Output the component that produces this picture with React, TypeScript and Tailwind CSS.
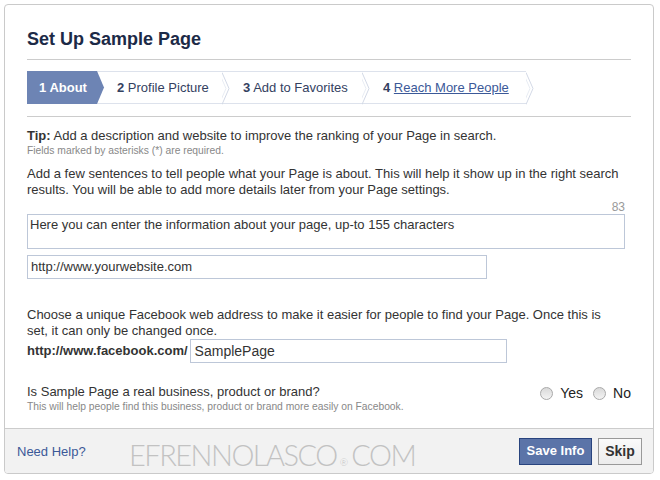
import clsx from "clsx";

const FONT = { fontFamily: '"Liberation Sans", Arial, sans-serif' };

type Step = { n: number; label: string; w: string; pl: string; active?: boolean; link?: boolean };

const STEPS: Step[] = [
  { n: 1, label: "About", w: "w-[70px]", pl: "pl-[12px]", active: true },
  { n: 2, label: "Profile Picture", w: "w-[125px]", pl: "pl-[20px]" },
  { n: 3, label: "Add to Favorites", w: "w-[140px]", pl: "pl-[21px]" },
  { n: 4, label: "Reach More People", w: "w-[164px]", pl: "pl-[21px]", link: true },
];

function StepTab({ step }: { step: Step }) {
  return (
    <div
      className={clsx(
        "relative flex h-[33px] items-center text-[13px]",
        step.w,
        step.pl,
        step.active ? "bg-[#6d84b4] text-white" : "border-y border-[#dde2ec] text-[#34415f]"
      )}
    >
      <span className={clsx(step.active && "font-bold")}>
        <b>{step.n}</b>{" "}
        <span className={clsx(step.link && "text-[#3b5998] underline")}>{step.label}</span>
      </span>
      {/* chevron at the right edge */}
      <svg className="absolute left-full top-0 z-10 h-[33px] w-[9px]" viewBox="0 0 9 33">
        {step.active ? (
          <polygon points="0,0 7,16.5 0,33" fill="#6d84b4" />
        ) : (
          <>
            <polyline points="-3,0.5 4,16.5 -3,32.5" fill="none" stroke="#e8ecf3" strokeWidth="1" />
            <polyline points="0,0.5 7,16.5 0,32.5" fill="none" stroke="#d3d9e6" strokeWidth="1" />
          </>
        )}
      </svg>
    </div>
  );
}

function Radio({ label }: { label: string }) {
  return (
    <label className="flex items-center gap-[7px]">
      <span className="h-[13px] w-[13px] rounded-full border border-[#a9a9a9] bg-gradient-to-b from-[#d9d9d9] to-[#f4f4f4]" />
      <span>{label}</span>
    </label>
  );
}

export default function App() {
  return (
    <div className="min-h-[480px] bg-white pl-[4px] pt-[4px]" style={FONT}>
      <div className="relative flex h-[470px] w-[650px] flex-col overflow-hidden rounded-[4px] border border-[#cacaca] text-[13px] text-[#333]">
        <div className="flex-1 px-[22px] pt-[24px]">
          <h1 className="border-b border-[#ccc] pb-[10px] text-[18px] font-bold leading-[20px] text-[#1c2a47]">
            Set Up Sample Page
          </h1>

          <div className="mt-[11px] flex border-b border-[#ccc] pb-[12px]">
            {STEPS.map((s) => (
              <StepTab key={s.n} step={s} />
            ))}
          </div>

          <p className="mt-[11px] leading-[16px]">
            <b>Tip:</b> Add a description and website to improve the ranking of your Page in search.
          </p>
          <p className="mt-[1px] text-[10.3px] leading-[12px] text-[#888]">Fields marked by asterisks (*) are required.</p>

          <p className="mt-[9px] max-w-[600px] leading-[16px]">
            Add a few sentences to tell people what your Page is about. This will help it show up in the right search
            results. You will be able to add more details later from your Page settings.
          </p>
          <div className="w-[598px] pt-[2px] text-right text-[12px] leading-[14px] text-[#999]">83</div>
          <div className="h-[35px] w-[598px] border border-[#bdc7d8] px-[2px] pt-[2px] leading-[16px]">
            Here you can enter the information about your page, up-to 155 characters
          </div>
          <div className="mt-[6px] flex h-[24px] w-[460px] items-center border border-[#bdc7d8] px-[3px]">
            http://www.yourwebsite.com
          </div>

          <p className="mt-[28px] max-w-[588px] leading-[16px]">
            Choose a unique Facebook web address to make it easier for people to find your Page. Once this is set, it
            can only be changed once.
          </p>
          <div className="flex items-center">
            <span className="font-bold">http://www.facebook.com/</span>
            <div className="ml-[2px] flex h-[24px] w-[317px] items-center border border-[#bdc7d8] px-[4px] text-[14px]">
              SamplePage
            </div>
          </div>

          <div className="mt-[21px] flex items-start justify-between">
            <div>
              <p className="leading-[16px]">Is Sample Page a real business, product or brand?</p>
              <p className="mt-[1px] text-[10.3px] leading-[12px] text-[#888]">
                This will help people find this business, product or brand more easily on Facebook.
              </p>
            </div>
            <div className="flex gap-[10px] pt-[1px] text-[14px] leading-[16px] text-[#222]">
              <Radio label="Yes" />
              <Radio label="No" />
            </div>
          </div>
        </div>

        <div className="relative flex h-[45px] items-center justify-between border-t border-[#ccc] bg-[#f2f2f2] pl-[12px] pr-[11px]">
          <a className="mt-[2px] text-[13px] text-[#3b5998]">Need Help?</a>
          <div
            className="pointer-events-none absolute left-[124px] top-[9px] flex items-baseline text-[29px] font-light leading-[34px] tracking-[-1.5px] text-[#c2c2c2]"
            style={{ fontFamily: 'Lato, "Liberation Sans", sans-serif' }}
          >
            <span>EFRENNOLASCO</span>
            <span className="mx-[3px] text-[10px] tracking-normal">®</span>
            <span>COM</span>
          </div>
          <div className="flex gap-[6px]">
            <button className="h-[27px] w-[73px] border border-[#29447e] bg-[#5b74a8] text-[13px] font-bold text-white">
              Save Info
            </button>
            <button className="h-[27px] w-[44px] border border-[#999] bg-gradient-to-b from-[#fafafa] to-[#ececec] text-[14px] font-bold text-[#333]">
              Skip
            </button>
          </div>
        </div>
      </div>
    </div>
  );
}
